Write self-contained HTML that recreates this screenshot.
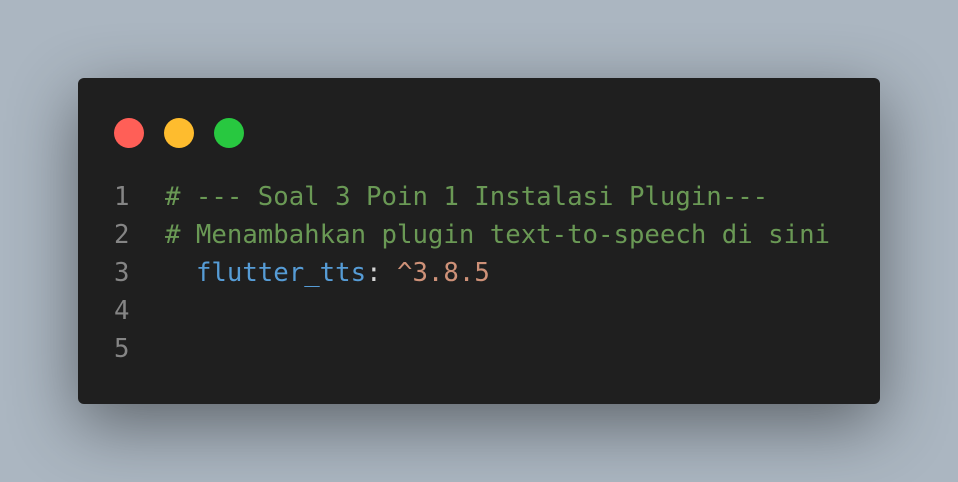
<!DOCTYPE html>
<html><head><style>
html,body{margin:0;padding:0}
body{width:958px;height:482px;background:#abb6c1;position:relative;overflow:hidden}
.card{position:absolute;left:78px;top:78px;width:802px;height:326px;background:#1f1f1f;border-radius:6px;box-shadow:0 20px 68px rgba(0,0,0,.45)}
.dot{position:absolute;top:118px;width:30px;height:30px;border-radius:50%}
.code{position:absolute;left:0;top:0;font-family:"DejaVu Sans Mono","Liberation Mono",monospace;font-size:25.7px;white-space:pre}
.ln{position:absolute;left:114px;color:#858585}
.tx{position:absolute;left:165px}
.g{color:#6a9955}.b{color:#569cd6}.o{color:#ce9178}.w{color:#d4d4d4}
</style></head><body>
<div class="card"></div>
<div class="dot" style="left:114px;background:#ff5f57"></div>
<div class="dot" style="left:164px;background:#febc2e"></div>
<div class="dot" style="left:214px;background:#28c840"></div>
<div class="code">
<div class="ln" style="top:182px">1</div><div class="tx g" style="top:182px"># --- Soal 3 Poin 1 Instalasi Plugin---</div>
<div class="ln" style="top:220px">2</div><div class="tx g" style="top:220px"># Menambahkan plugin text-to-speech di sini</div>
<div class="ln" style="top:258px">3</div><div class="tx" style="top:258px">  <span class="b">flutter_tts</span><span class="w">:</span> <span class="o">^3.8.5</span></div>
<div class="ln" style="top:296px">4</div>
<div class="ln" style="top:334px">5</div>
</div>
</body></html>
